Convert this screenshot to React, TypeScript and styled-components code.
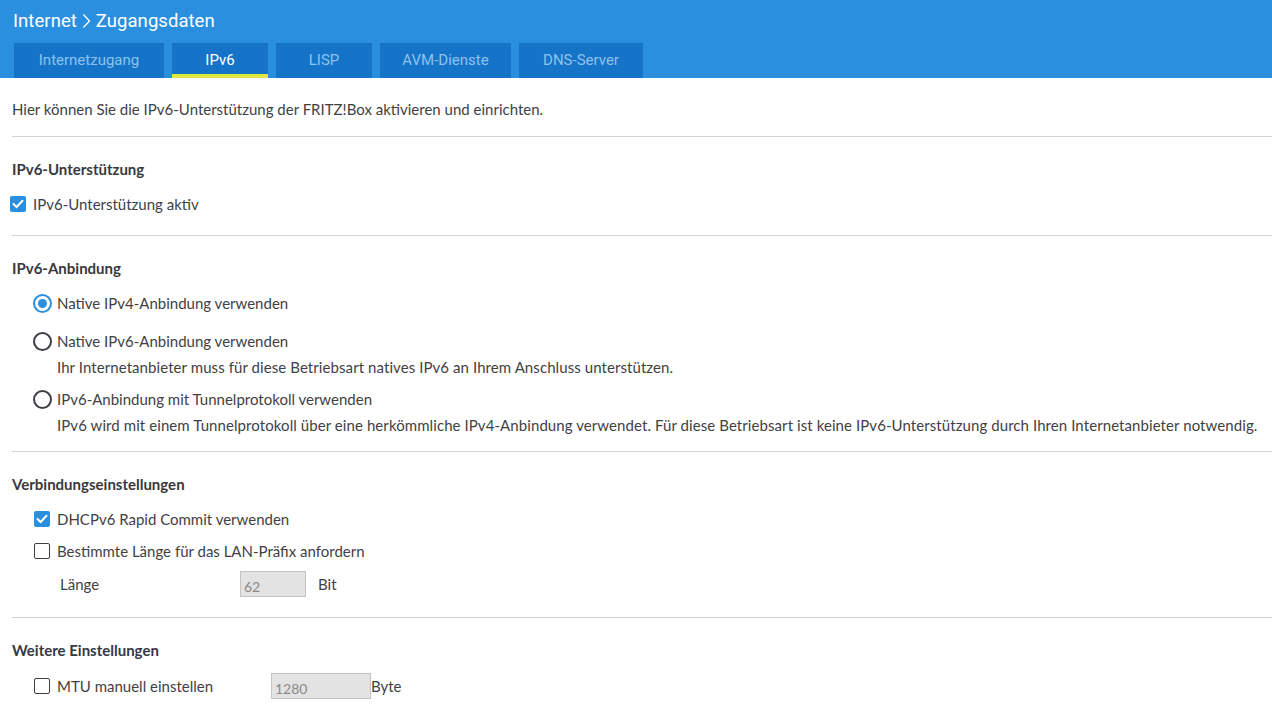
import React from "react";
import styled, { createGlobalStyle } from "styled-components";

const GlobalStyle = createGlobalStyle`
  html, body {
    margin: 0;
    padding: 0;
    background: #ffffff;
  }
  body {
    font-family: Lato, "Open Sans", sans-serif;
    color: #3f3f46;
  }
`;

const tabs = [
  { title: "Internetzugang", width: 150 },
  { title: "IPv6", width: 96 },
  { title: "LISP", width: 96 },
  { title: "AVM-Dienste", width: 131 },
  { title: "DNS-Server", width: 124 },
];

function App() {
  return (
    <Page>
      <GlobalStyle />
      <Header>
        <Crumbs>
          Internet
          <Chevron width="9" height="16" viewBox="0 0 9 16">
            <path d="M1.5 1.5 L7.5 8 L1.5 14.5" fill="none" stroke="#fff" strokeWidth="1.3" />
          </Chevron>
          Zugangsdaten
        </Crumbs>
        <TabBar>
          {tabs.map((t) => (
            <Tab key={t.title} width={t.width} active={t.title === "IPv6"}>
              {t.title}
            </Tab>
          ))}
        </TabBar>
      </Header>

      <Content>
        <Intro>Hier können Sie die IPv6-Unterstützung der FRITZ!Box aktivieren und einrichten.</Intro>

        <Section bottom={20}>
          <Heading>IPv6-Unterstützung</Heading>
          <TopRow>
            <Check checked />
            <span>IPv6-Unterstützung aktiv</span>
          </TopRow>
        </Section>

        <Section bottom={15}>
          <Heading>IPv6-Anbindung</Heading>
          <RadioList>
            <RadioItem spaced>
              <RadioRow>
                <Radio checked />
                <span>Native IPv4-Anbindung verwenden</span>
              </RadioRow>
            </RadioItem>
            <RadioItem>
              <RadioRow>
                <Radio />
                <span>Native IPv6-Anbindung verwenden</span>
              </RadioRow>
              <Hint>Ihr Internetanbieter muss für diese Betriebsart natives IPv6 an Ihrem Anschluss unterstützen.</Hint>
            </RadioItem>
            <RadioItem>
              <RadioRow>
                <Radio />
                <span>IPv6-Anbindung mit Tunnelprotokoll verwenden</span>
              </RadioRow>
              <Hint>
                IPv6 wird mit einem Tunnelprotokoll über eine herkömmliche IPv4-Anbindung verwendet. Für diese
                Betriebsart ist keine IPv6-Unterstützung durch Ihren Internetanbieter notwendig.
              </Hint>
            </RadioItem>
          </RadioList>
        </Section>

        <Section bottom={20}>
          <Heading>Verbindungseinstellungen</Heading>
          <Indented>
            <Row>
              <Check checked />
              <span>DHCPv6 Rapid Commit verwenden</span>
            </Row>
            <Row>
              <Check />
              <span>Bestimmte Länge für das LAN-Präfix anfordern</span>
            </Row>
            <FieldRow>
              <FieldLabel offset={26} width={180}>Länge</FieldLabel>
              <Input width={66} value="62" readOnly />
              <Unit gap={12}>Bit</Unit>
            </FieldRow>
          </Indented>
        </Section>

        <Section bottom={0} last>
          <Heading>Weitere Einstellungen</Heading>
          <Indented>
            <FieldRow>
              <Check />
              <FieldLabel offset={7} width={214}>MTU manuell einstellen</FieldLabel>
              <Input width={100} value="1280" readOnly />
              <Unit gap={0}>Byte</Unit>
            </FieldRow>
          </Indented>
        </Section>
      </Content>
    </Page>
  );
}

function Check({ checked }: { checked?: boolean }) {
  return checked ? (
    <CheckBox checked>
      <svg width="12" height="10" viewBox="0 0 12 10">
        <path d="M1.5 5 L4.6 8 L10.5 1.8" fill="none" stroke="#fff" strokeWidth="2" strokeLinecap="round" />
      </svg>
    </CheckBox>
  ) : (
    <CheckBox />
  );
}

function Radio({ checked }: { checked?: boolean }) {
  return <RadioCircle checked={checked}>{checked && <Dot />}</RadioCircle>;
}

export default App;

const Page = styled.div`
  width: 1272px;
  min-height: 710px;
`;

const Header = styled.header`
  background: #2a8fde;
  padding: 10px 0 0 14px;
  height: 68px;
  display: flex;
  flex-direction: column;
`;

const Crumbs = styled.div`
  display: flex;
  align-items: center;
  gap: 4px;
  color: #ffffff;
  font-family: Roboto, sans-serif;
  font-size: 18.5px;
  letter-spacing: 0.05px;
  height: 22px;
  margin-left: -1px;
`;

const Chevron = styled.svg`
  margin: 0 1px;
`;

const TabBar = styled.nav`
  display: flex;
  gap: 8px;
  margin-top: 11px;
`;

const Tab = styled.div<{ active?: boolean; width: number }>`
  width: ${(p) => p.width}px;
  height: 35px;
  display: flex;
  align-items: center;
  justify-content: center;
  background: #1574c8;
  color: ${(p) => (p.active ? "#ffffff" : "#8ec2ee")};
  font-family: Roboto, sans-serif;
  font-size: 15px;
  box-sizing: border-box;
  border-bottom: 4px solid ${(p) => (p.active ? "#dfe63f" : "transparent")};
  padding-top: 3px;
`;

const Content = styled.main`
  padding: 0 0 0 12px;
  font-size: 15px;
`;

const Intro = styled.p`
  margin: 0;
  padding: 20px 0 16px;
  line-height: 22px;
  border-bottom: 1px solid #d4d4d4;
`;

const Section = styled.section<{ last?: boolean; bottom: number }>`
  padding: 21px 0 ${(p) => p.bottom}px;
  border-bottom: ${(p) => (p.last ? "none" : "1px solid #d4d4d4")};
`;

const Heading = styled.h2`
  margin: 0 0 13px;
  font-size: 15px;
  font-weight: 700;
  line-height: 22px;
  color: #38383f;
`;

const Row = styled.label`
  display: flex;
  align-items: center;
  gap: 7px;
  height: 22px;
  line-height: 22px;
`;

const TopRow = styled(Row)`
  margin-left: -2px;
`;

const RadioRow = styled(Row)`
  gap: 5px;
`;

const RadioList = styled.div`
  padding-left: 21px;
  margin-top: 1px;
  display: flex;
  flex-direction: column;
  gap: 10px;
`;

const RadioItem = styled.div<{ spaced?: boolean }>`
  display: flex;
  flex-direction: column;
  gap: 4px;
  padding-bottom: ${(p) => (p.spaced ? "6px" : "0")};
`;

const Hint = styled.div`
  padding-left: 24px;
  line-height: 22px;
  letter-spacing: 0.08px;
`;

const Indented = styled.div`
  padding-left: 22px;
  display: flex;
  flex-direction: column;
  gap: 10px;
`;

const CheckBox = styled.span<{ checked?: boolean }>`
  width: 16px;
  height: 16px;
  box-sizing: border-box;
  border-radius: 2px;
  display: inline-flex;
  align-items: center;
  justify-content: center;
  flex: none;
  background: ${(p) => (p.checked ? "#2a8fde" : "#fff")};
  border: ${(p) => (p.checked ? "none" : "1.5px solid #3f3f46")};
`;

const RadioCircle = styled.span<{ checked?: boolean }>`
  width: 19px;
  height: 19px;
  box-sizing: border-box;
  border-radius: 50%;
  flex: none;
  display: inline-flex;
  align-items: center;
  justify-content: center;
  border: 2px solid ${(p) => (p.checked ? "#2a8fde" : "#3f3f46")};
`;

const Dot = styled.span`
  width: 9px;
  height: 9px;
  border-radius: 50%;
  background: #2a8fde;
`;

const FieldRow = styled.div`
  display: flex;
  align-items: center;
  height: 26px;
  margin-top: -1px;
`;

const FieldLabel = styled.span<{ width: number; offset: number }>`
  width: ${(p) => p.width}px;
  margin-left: ${(p) => p.offset}px;
  flex: none;
`;

const Input = styled.input<{ width: number }>`
  width: ${(p) => p.width}px;
  height: 26px;
  box-sizing: border-box;
  background: #e3e3e3;
  border: 1px solid #c4c4c4;
  color: #8a8a8a;
  font-family: Lato, sans-serif;
  font-size: 14px;
  padding: 4px 3px 0;
  outline: none;
`;

const Unit = styled.span<{ gap: number }>`
  margin-left: ${(p) => p.gap}px;
`;
